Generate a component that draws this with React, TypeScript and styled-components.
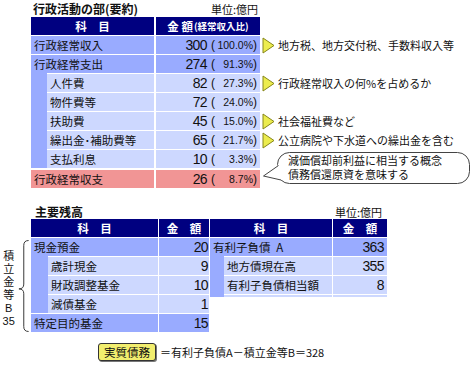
import styled, { createGlobalStyle } from 'styled-components';

const NAVY = '#000080';
const BLUE = '#99abff';
const LIGHT = '#cdd8ff';
const PINK = '#f19595';

const GlobalStyle = createGlobalStyle`
  body {
    margin: 0;
    background: #fff;
    font-family: "Noto Sans CJK JP", "Liberation Sans", sans-serif;
    color: #111;
  }
`;

const Page = styled.div`
  width: 475px;
  height: 365px;
  overflow: hidden;
`;

const TitleBar = styled.div<{ $left: number; $width: number; $height: number; $top?: number }>`
  display: flex;
  justify-content: space-between;
  align-items: center;
  margin-left: ${p => p.$left}px;
  margin-top: ${p => p.$top ?? 0}px;
  width: ${p => p.$width}px;
  height: ${p => p.$height}px;
`;

const Title = styled.span<{ $pad: number }>`
  font-size: 12px;
  font-weight: 700;
  padding-left: ${p => p.$pad}px;
`;

const Unit = styled.span<{ $pad: number }>`
  font-size: 11px;
  padding-right: ${p => p.$pad}px;
`;

const Section = styled.div<{ $left: number; $gap?: number }>`
  display: flex;
  align-items: flex-start;
  padding-left: ${p => p.$left}px;
  gap: ${p => p.$gap ?? 0}px;
`;

const Table = styled.div<{ $width: number }>`
  display: flex;
  flex-direction: column;
  gap: 1px;
  width: ${p => p.$width}px;
  flex: none;
`;

const Row = styled.div<{ $label: number; $amount: number; $gap: number; $indent?: number; $height?: number; $top?: number }>`
  display: grid;
  grid-template-columns: ${p => p.$label}px ${p => p.$amount}px;
  column-gap: ${p => p.$gap}px;
  height: ${p => p.$height ?? 18}px;
  margin-left: ${p => p.$indent ?? 0}px;
  margin-top: ${p => p.$top ?? 0}px;
`;

const Group = styled.div<{ $band: number }>`
  display: flex;
  flex-direction: column;
  gap: 1px;
  background: linear-gradient(to right, ${BLUE} ${p => p.$band}px, transparent ${p => p.$band}px);
`;

const HeadCell = styled.div`
  background: ${NAVY};
  color: #fff;
  font-weight: 700;
  font-size: 11.5px;
  display: flex;
  align-items: center;
  justify-content: center;
  white-space: nowrap;
`;

const HeadSmall = styled.span`
  font-size: 9.5px;
  margin-left: 1px;
`;

const Label = styled.div<{ $bg: string }>`
  background: ${p => p.$bg};
  display: flex;
  align-items: center;
  padding-left: 3px;
  font-size: 11.5px;
  white-space: nowrap;
`;

const Amount = styled.div<{ $bg: string; $pad?: number }>`
  background: ${p => p.$bg};
  display: flex;
  align-items: center;
  justify-content: ${p => (p.$pad === undefined ? 'flex-start' : 'flex-end')};
  padding-right: ${p => p.$pad ?? 0}px;
  font-family: "Liberation Sans", Arial, sans-serif;
  white-space: nowrap;
`;

const Num = styled.span<{ $width?: number }>`
  display: inline-block;
  width: ${p => (p.$width ? `${p.$width}px` : 'auto')};
  text-align: right;
  font-size: 14px;
  letter-spacing: -0.6px;
`;

const Paren = styled.span<{ $left: number }>`
  font-size: 12px;
  margin-left: ${p => p.$left}px;
`;

const Pct = styled.span`
  display: inline-block;
  width: 38px;
  text-align: right;
  font-size: 10.5px;
`;

const Notes = styled.div`
  position: relative;
  display: flex;
  flex-direction: column;
  gap: 1px;
  margin-left: 2px;
  flex: 1;
`;

const NoteRow = styled.div`
  height: 18px;
  display: flex;
  align-items: center;
  gap: 3px;
  font-size: 11px;
  white-space: nowrap;
`;

const Bubble = styled.div`
  position: absolute;
  left: 0;
  top: 133px;
  width: 211px;
  height: 36px;
  padding: 4px 0 0 26px;
  box-sizing: border-box;
  font-family: "Liberation Sans", "Noto Sans CJK JP", sans-serif;
  font-size: 11px;
  line-height: 14px;
  white-space: nowrap;

  svg {
    position: absolute;
    left: 0;
    top: 0;
    z-index: -1;
  }
`;

const BubbleText = styled.div`
  position: relative;
  height: 14px;
`;

const BraceArea = styled.div`
  display: flex;
  width: 30px;
  flex: none;
  padding-top: 19px;
`;

const BraceText = styled.div`
  width: 18px;
  display: flex;
  flex-direction: column;
  align-items: center;
  padding-top: 12px;
  font-family: "Liberation Sans", "Noto Sans CJK JP", sans-serif;
  font-size: 11px;
  line-height: 13px;

  span {
    height: 13px;
  }
`;

const Formula = styled.div`
  display: flex;
  align-items: center;
  margin-top: 9px;
  padding-left: 98px;
  gap: 4px;
  font-size: 11px;
  white-space: nowrap;
`;

const Badge = styled.div`
  width: 58px;
  height: 18px;
  box-sizing: border-box;
  border: 1px solid #333;
  border-radius: 3px;
  background: #f2ee6e;
  box-shadow: 1px 1px 0 #777;
  display: flex;
  align-items: center;
  justify-content: center;
  font-size: 11.5px;
`;

const Arrow = () => (
  <svg width="13" height="17" viewBox="0 0 13 17">
    <polygon points="1,1 12,8.5 1,16" fill="#ecec4e" stroke="#86861a" strokeWidth="1" />
  </svg>
);

function TopAmount({ bg, num, pct }: { bg: string; num: string; pct: string }) {
  return (
    <Amount $bg={bg}>
      <Num $width={51}>{num}</Num>
      <Paren $left={4}>(</Paren>
      <Pct>{pct}</Pct>
      <Paren $left={0}>)</Paren>
    </Amount>
  );
}

const T = { label: 123, amount: 104, gap: 2 };
const L = { label: 127, amount: 50, gap: 1 };
const R = { label: 122, amount: 54, gap: 1 };

export default function App() {
  return (
    <Page>
      <GlobalStyle />
      <TitleBar $left={31} $width={229} $height={17}>
        <Title $pad={2}>行政活動の部(要約)</Title>
        <Unit $pad={2}>単位:億円</Unit>
      </TitleBar>

      <Section $left={31}>
        <Table $width={229}>
          <Row $label={T.label} $amount={T.amount} $gap={T.gap}>
            <HeadCell>科　目</HeadCell>
            <HeadCell>
              金 額<HeadSmall>(経常収入比)</HeadSmall>
            </HeadCell>
          </Row>
          <Row $label={T.label} $amount={T.amount} $gap={T.gap}>
            <Label $bg={BLUE}>行政経常収入</Label>
            <TopAmount bg={BLUE} num="300" pct="100.0%" />
          </Row>
          <Group $band={16}>
            <Row $label={T.label} $amount={T.amount} $gap={T.gap}>
              <Label $bg={BLUE}>行政経常支出</Label>
              <TopAmount bg={BLUE} num="274" pct="91.3%" />
            </Row>
            {[
              ['人件費', '82', '27.3%'],
              ['物件費等', '72', '24.0%'],
              ['扶助費', '45', '15.0%'],
              ['繰出金･補助費等', '65', '21.7%'],
              ['支払利息', '10', '3.3%'],
            ].map(([label, num, pct]) => (
              <Row key={label} $label={T.label - 16} $amount={T.amount} $gap={T.gap} $indent={16}>
                <Label $bg={LIGHT}>{label}</Label>
                <TopAmount bg={LIGHT} num={num} pct={pct} />
              </Row>
            ))}
          </Group>
          <Row $label={T.label} $amount={T.amount} $gap={T.gap} $top={1}>
            <Label $bg={PINK}>行政経常収支</Label>
            <TopAmount bg={PINK} num="26" pct="8.7%" />
          </Row>
        </Table>

        <Notes>
          <NoteRow />
          <NoteRow>
            <Arrow />
            地方税、地方交付税、手数料収入等
          </NoteRow>
          <NoteRow />
          <NoteRow>
            <Arrow />
            行政経常収入の何%を占めるか
          </NoteRow>
          <NoteRow />
          <NoteRow>
            <Arrow />
            社会福祉費など
          </NoteRow>
          <NoteRow>
            <Arrow />
            公立病院や下水道への繰出金を含む
          </NoteRow>
          <Bubble>
            <svg width="211" height="36" viewBox="0 0 211 36">
              <rect x="15.5" y="2.5" width="192" height="31" rx="12" ry="12" fill="#fff" stroke="#444" strokeWidth="1" />
              <polygon points="1,26 16,15 23,16 23,29 19,30" fill="#fff" />
              <polyline points="16.5,15.5 1.5,26 19,30" fill="none" stroke="#444" strokeWidth="1" />
            </svg>
            <BubbleText>減価償却前利益に相当する概念</BubbleText>
            <BubbleText>債務償還原資を意味する</BubbleText>
          </Bubble>
        </Notes>
      </Section>

      <TitleBar $left={30} $width={356} $height={15} $top={16}>
        <Title $pad={5}>主要残高</Title>
        <Unit $pad={4}>単位:億円</Unit>
      </TitleBar>

      <Section $left={0} $gap={1}>
        <BraceArea>
          <BraceText>
            <span>積</span>
            <span>立</span>
            <span>金</span>
            <span>等</span>
            <span>B</span>
            <span>35</span>
          </BraceText>
          <svg width="13" height="96" viewBox="0 0 13 96">
            <path
              d="M12 1 Q7 1 7 6 L7 46 Q7 51 2 51 Q7 51 7 56 L7 90 Q7 95 12 95"
              fill="none"
              stroke="#333"
              strokeWidth="1"
            />
          </svg>
        </BraceArea>

        <Table $width={178}>
          <Row $label={L.label} $amount={L.amount} $gap={L.gap}>
            <HeadCell>科　目</HeadCell>
            <HeadCell>金　額</HeadCell>
          </Row>
          <Group $band={17}>
            <Row $label={L.label} $amount={L.amount} $gap={L.gap}>
              <Label $bg={BLUE}>現金預金</Label>
              <Amount $bg={BLUE} $pad={1}>
                <Num>20</Num>
              </Amount>
            </Row>
            {[
              ['歳計現金', '9'],
              ['財政調整基金', '10'],
              ['減債基金', '1'],
            ].map(([label, num]) => (
              <Row key={label} $label={L.label - 17} $amount={L.amount} $gap={L.gap} $indent={17}>
                <Label $bg={LIGHT}>{label}</Label>
                <Amount $bg={LIGHT} $pad={1}>
                  <Num>{num}</Num>
                </Amount>
              </Row>
            ))}
          </Group>
          <Row $label={L.label} $amount={L.amount} $gap={L.gap}>
            <Label $bg={BLUE}>特定目的基金</Label>
            <Amount $bg={BLUE} $pad={1}>
              <Num>15</Num>
            </Amount>
          </Row>
        </Table>

        <Table $width={177}>
          <Row $label={R.label} $amount={R.amount} $gap={R.gap}>
            <HeadCell>科　目</HeadCell>
            <HeadCell>金　額</HeadCell>
          </Row>
          <Group $band={14}>
            <Row $label={R.label} $amount={R.amount} $gap={R.gap}>
              <Label $bg={BLUE}>有利子負債{'\u2002'}A</Label>
              <Amount $bg={BLUE} $pad={3}>
                <Num>363</Num>
              </Amount>
            </Row>
            {[
              ['地方債現在高', '355'],
              ['有利子負債相当額', '8'],
            ].map(([label, num]) => (
              <Row key={label} $label={R.label - 14} $amount={R.amount} $gap={R.gap} $indent={14}>
                <Label $bg={LIGHT}>{label}</Label>
                <Amount $bg={LIGHT} $pad={3}>
                  <Num>{num}</Num>
                </Amount>
              </Row>
            ))}
            <Row $label={R.label - 14} $amount={R.amount} $gap={R.gap} $indent={14} $height={2}>
              <Label $bg={LIGHT} />
              <Amount $bg={LIGHT} />
            </Row>
          </Group>
        </Table>
      </Section>

      <Formula>
        <Badge>実質債務</Badge>
        <span>＝有利子負債A－積立金等B＝328</span>
      </Formula>
    </Page>
  );
}
